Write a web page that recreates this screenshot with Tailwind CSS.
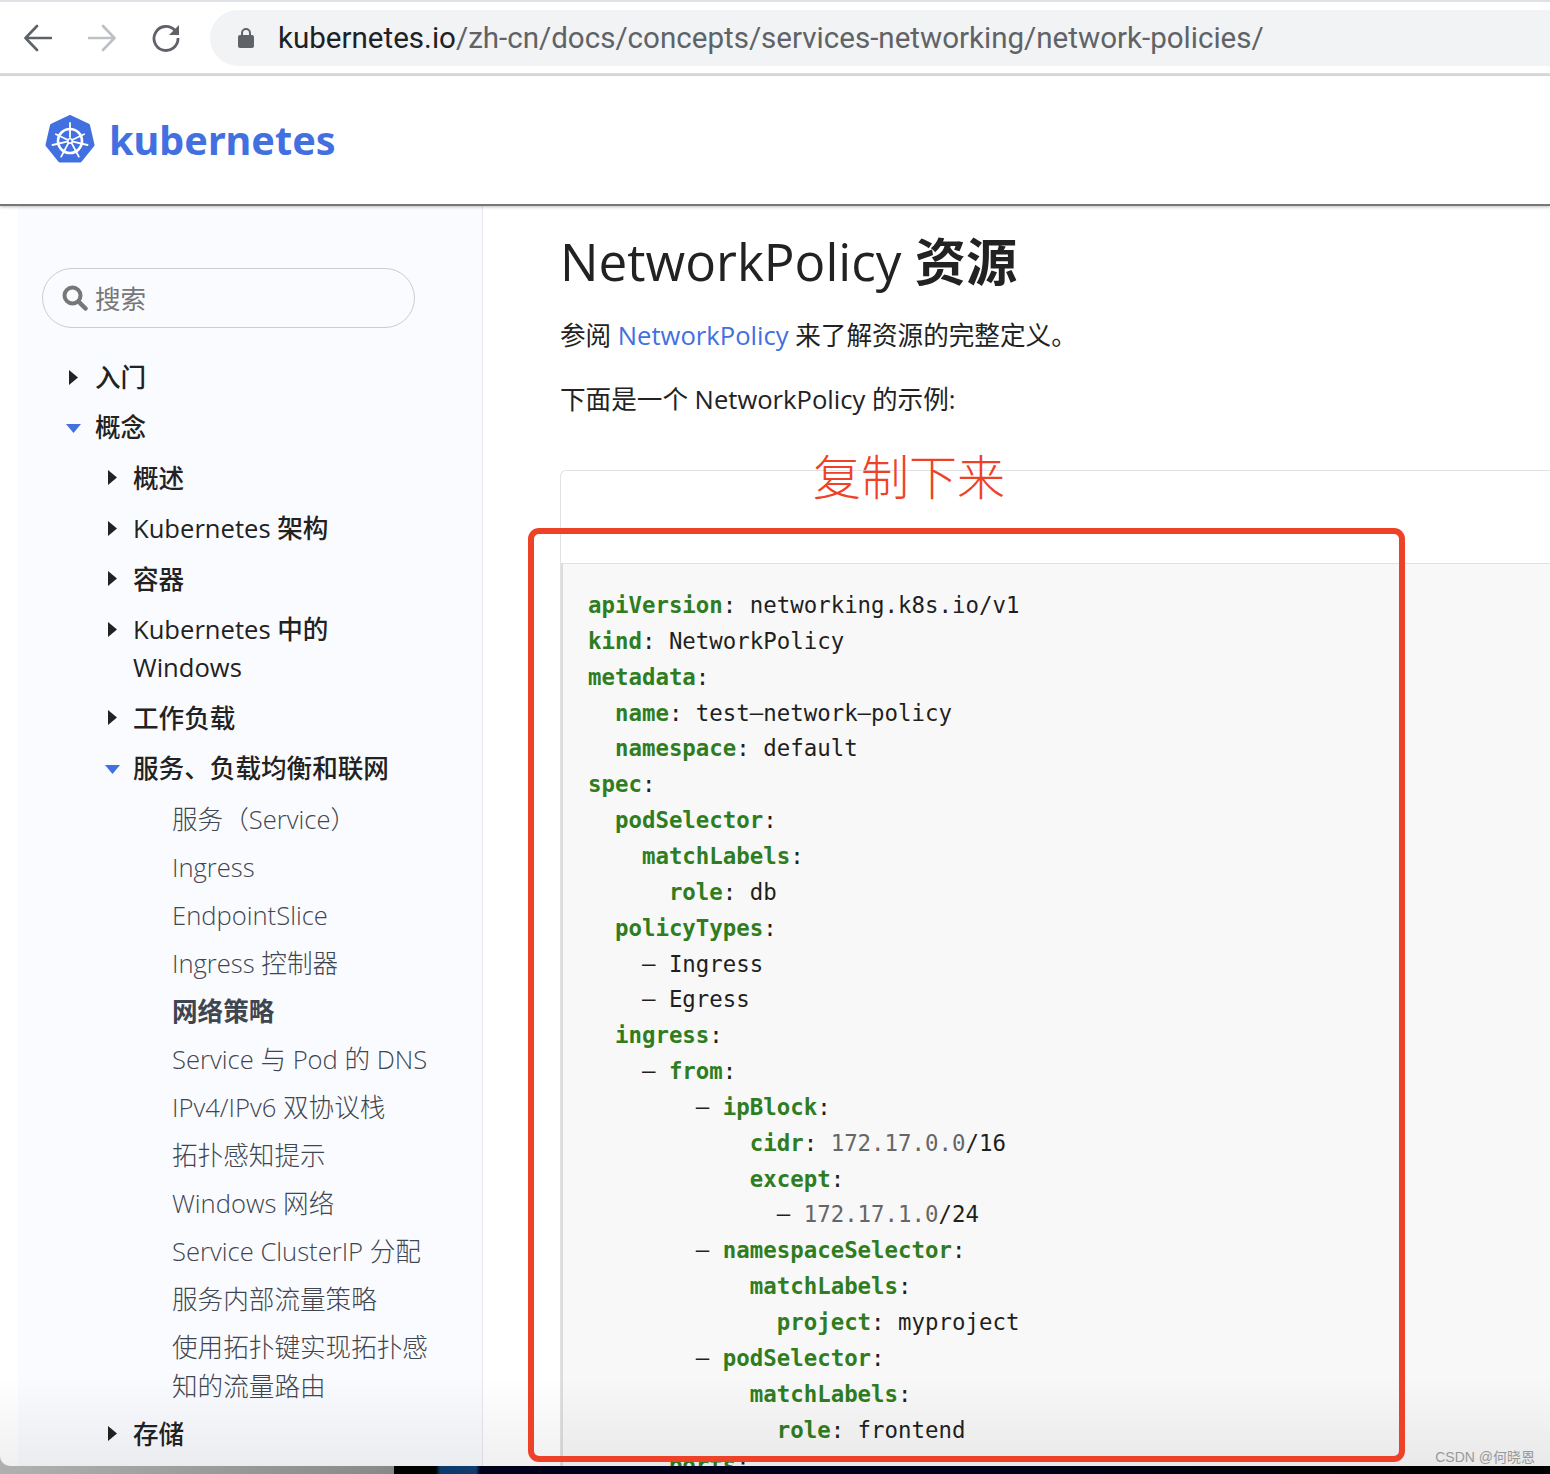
<!DOCTYPE html>
<html lang="zh-CN">
<head>
  <meta charset="UTF-8" />
  <meta name="viewport" content="width=device-width, initial-scale=1.0" />
  <script src="https://cdn.jsdelivr.net/npm/@tailwindcss/browser@4"></script>
  <title>网络策略 | Kubernetes</title>
</head>
<body class="relative h-[1474px] overflow-hidden bg-[linear-gradient(90deg,#b0b0b0_0,#888_394px,#000_394px,#000_436px,#0a3a6a_440px,#123c6e_476px,#00001c_480px,#00001a_1000px,#000_1400px)] font-['Open_Sans','Noto_Sans_CJK_SC',sans-serif] text-[#222]">

  <!-- Browser window -->
  <div class="relative flex h-[1466px] flex-col overflow-hidden rounded-bl-[10px] bg-white">

    <!-- Browser toolbar -->
    <div class="flex h-[76px] shrink-0 items-center border-t-2 border-b-[3px] border-t-[#dee1e6] border-b-[#dcdcdc] bg-white pl-[24px]">
      <svg class="w-[28px] h-[28px]" viewBox="0 0 28 28" fill="none" stroke="#5f6368" stroke-width="2.6" stroke-linecap="round" stroke-linejoin="round"><path d="M27 14H2M13 2 1.5 14 13 26"/></svg>
      <svg class="ml-[36px] w-[28px] h-[28px]" viewBox="0 0 28 28" fill="none" stroke="#bdc1c6" stroke-width="2.6" stroke-linecap="round" stroke-linejoin="round"><path d="M1 14h25M15 2l11.500 12L15 26"/></svg>
      <svg class="ml-[36px] w-[28px] h-[28px]" viewBox="0 0 28 28" fill="none"><path d="M23 6.500A12 12 0 1 0 26 14" stroke="#5f6368" stroke-width="2.8"/><path d="M27 1v10H17z" fill="#5f6368"/></svg>
      <div class="ml-[30px] flex h-[56px] flex-1 items-center rounded-l-full bg-[#f1f3f4] pl-[28px] font-['Roboto',sans-serif] text-[29.560px]">
        <svg class="w-[16px] h-[21px]" viewBox="0 0 16 21"><path d="M4 9V6a4 4 0 0 1 8 0v3" fill="none" stroke="#5f6368" stroke-width="2"/><rect x="0" y="8" width="16" height="13" rx="2" fill="#5f6368"/></svg>
        <span class="ml-[24px] pt-[2px] text-[#202124]">kubernetes.io<span class="text-[#5f6368]">/zh-cn/docs/concepts/services-networking/network-policies/</span></span>
      </div>
    </div>

    <!-- Site header -->
    <header class="relative z-10 flex h-[130px] shrink-0 items-center border-b-2 border-[#777] bg-white pl-[45px] shadow-[0_1px_3px_rgba(0,0,0,0.25)]">
      <svg class="w-[50px] h-[50px]" viewBox="0 0 50 50">
        <polygon points="25,2 43,10.500 47.500,30 35,45.500 15,45.500 2.500,30 7,10.500" fill="#4270e0" stroke="#4270e0" stroke-width="4" stroke-linejoin="round"/>
        <g stroke="#fff" fill="none" stroke-linecap="round">
          <circle cx="25" cy="26" r="12" stroke-width="2.600"/>
          <circle cx="25" cy="26" r="2.200" stroke-width="1.600"/>
          <path stroke-width="1.800" d="M25 8V22M39.100 19.200 27.500 24.700M42.500 30 27.900 26.700M33.800 41.600 26.800 28.300M16.200 41.600 23.200 28.300M7.500 30 22.100 26.700M10.900 19.200 22.500 24.700"/>
        </g>
      </svg>
      <span class="mt-[2px] ml-[14px] font-['Noto_Sans',sans-serif] text-[39.600px] leading-none font-bold text-[#4270e0]">kubernetes</span>
    </header>

    <div class="flex min-h-0 flex-1">
      <!-- Sidebar -->
      <aside class="ml-[18px] w-[465px] shrink-0 border-r border-[#e6e7ef] bg-[#fafbff] pt-[62px] text-[25.600px] leading-[38.400px]">
        <div class="ml-[24px] flex h-[60px] w-[373px] items-center rounded-[30px] border border-[#ccc] pl-[19px] text-[#777]">
          <svg class="w-[26px] h-[26px]" viewBox="0 0 26 26" fill="none" stroke="#777"><circle cx="10.500" cy="10.500" r="8" stroke-width="4"/><path d="m16.500 16.500 7 7" stroke-width="4.500" stroke-linecap="round"/></svg>
          <span class="ml-[7px] pt-[4px]">搜索</span>
        </div>

        <nav class="mt-[25px] font-medium">
          <div class="flex py-[6px] pl-[48px]">
            <span class="flex h-[36px] w-[29px] shrink-0 items-center"><svg class="ml-[3px] w-[9px] h-[15px]" viewBox="0 0 9 15"><path d="M0 0l9 7.500L0 15z" fill="#222"/></svg></span>入门
          </div>
          <div class="flex py-[6px] pl-[48px]">
            <span class="flex h-[38px] w-[29px] shrink-0 items-center"><svg class="w-[15px] h-[9px]" viewBox="0 0 15 9"><path d="M0 0h15L7.500 9z" fill="#4270e0"/></svg></span>概念
          </div>
          <div class="flex py-[6px] pl-[87px]">
            <span class="flex h-[36px] w-[28px] shrink-0 items-center"><svg class="ml-[3px] w-[9px] h-[15px]" viewBox="0 0 9 15"><path d="M0 0l9 7.500L0 15z" fill="#222"/></svg></span>概述
          </div>
          <div class="flex py-[6px] pl-[87px] font-normal">
            <span class="flex h-[36px] w-[28px] shrink-0 items-center"><svg class="ml-[3px] w-[9px] h-[15px]" viewBox="0 0 9 15"><path d="M0 0l9 7.500L0 15z" fill="#222"/></svg></span><span>Kubernetes <b class="font-medium">架构</b></span>
          </div>
          <div class="flex py-[6px] pl-[87px]">
            <span class="flex h-[36px] w-[28px] shrink-0 items-center"><svg class="ml-[3px] w-[9px] h-[15px]" viewBox="0 0 9 15"><path d="M0 0l9 7.500L0 15z" fill="#222"/></svg></span>容器
          </div>
          <div class="flex py-[6px] pl-[87px] font-normal">
            <span class="flex h-[36px] w-[28px] shrink-0 items-center"><svg class="ml-[3px] w-[9px] h-[15px]" viewBox="0 0 9 15"><path d="M0 0l9 7.500L0 15z" fill="#222"/></svg></span><span class="w-[220px]">Kubernetes <b class="font-medium">中的</b> Windows</span>
          </div>
          <div class="flex py-[6px] pl-[87px]">
            <span class="flex h-[36px] w-[28px] shrink-0 items-center"><svg class="ml-[3px] w-[9px] h-[15px]" viewBox="0 0 9 15"><path d="M0 0l9 7.500L0 15z" fill="#222"/></svg></span>工作负载
          </div>
          <div class="flex py-[6px] pl-[87px]">
            <span class="flex h-[38px] w-[28px] shrink-0 items-center"><svg class="w-[15px] h-[9px]" viewBox="0 0 15 9"><path d="M0 0h15L7.500 9z" fill="#4270e0"/></svg></span>服务、负载均衡和联网
          </div>

          <ul class="mt-[2px] mb-[-1.500px] pl-[154px] pr-[30px] font-light text-[#3f4650] [&_li]:py-[4.800px]">
            <li>服务（Service）</li>
            <li>Ingress</li>
            <li>EndpointSlice</li>
            <li>Ingress 控制器</li>
            <li class="font-bold">网络策略</li>
            <li>Service 与 Pod 的 DNS</li>
            <li>IPv4/IPv6 双协议栈</li>
            <li>拓扑感知提示</li>
            <li>Windows 网络</li>
            <li>Service ClusterIP 分配</li>
            <li>服务内部流量策略</li>
            <li>使用拓扑键实现拓扑感知的流量路由</li>
          </ul>

          <div class="flex py-[6px] pl-[87px]">
            <span class="flex h-[36px] w-[28px] shrink-0 items-center"><svg class="ml-[3px] w-[9px] h-[15px]" viewBox="0 0 9 15"><path d="M0 0l9 7.500L0 15z" fill="#222"/></svg></span>存储
          </div>
        </nav>
      </aside>

      <!-- Main content -->
      <main class="min-w-0 flex-1 pt-[19px] pl-[77px]">
        <h2 class="text-[51.200px] leading-[72px]">NetworkPolicy <b class="font-bold">资源</b></h2>
        <p class="mt-[20px] text-[25.600px] leading-[38.400px]">参阅 <a class="text-[#4270e0]">NetworkPolicy</a> 来了解资源的完整定义。</p>
        <p class="mt-[25.600px] text-[25.600px] leading-[38.400px]">下面是一个 NetworkPolicy 的示例:</p>

        <!-- Code card -->
        <div class="mt-[51px] h-[1000px] rounded-tl-[6px] border-t border-l border-[#e2e2e2] pt-[92px]">
          <pre class="h-[920px] border-t border-l-2 border-t-[#e2e2e2] border-l-[#ddd] bg-[#f8f8f8] pt-[23.700px] pl-[25px] font-['DejaVu_Sans_Mono',monospace] text-[22.400px] leading-[35.840px] text-[#1f1f1f] [&_b]:font-bold [&_b]:text-[#2f7d1f] [&_i]:text-[#666] [&_i]:not-italic"><b>apiVersion</b>: networking.k8s.io/v1
<b>kind</b>: NetworkPolicy
<b>metadata</b>:
  <b>name</b>: test–network–policy
  <b>namespace</b>: default
<b>spec</b>:
  <b>podSelector</b>:
    <b>matchLabels</b>:
      <b>role</b>: db
  <b>policyTypes</b>:
    – Ingress
    – Egress
  <b>ingress</b>:
    – <b>from</b>:
        – <b>ipBlock</b>:
            <b>cidr</b>: <i>172.17.0.0</i>/16
            <b>except</b>:
              – <i>172.17.1.0</i>/24
        – <b>namespaceSelector</b>:
            <b>matchLabels</b>:
              <b>project</b>: myproject
        – <b>podSelector</b>:
            <b>matchLabels</b>:
              <b>role</b>: frontend
      <b>ports</b>:</pre>
        </div>
      </main>
    </div>

    <!-- Window fade towards the bottom edge -->
    <div class="pointer-events-none absolute inset-x-0 bottom-0 h-[90px] bg-linear-to-b from-black/0 to-black/6"></div>

    <!-- Screenshot annotation -->
    <div class="absolute top-[528px] left-[528px] h-[934px] w-[877px] rounded-[11px] border-[6px] border-[#ee4228]"></div>
    <div class="absolute top-[442px] left-[813px] text-[48px] leading-[70px] font-light text-[#ee4228]">复制下来</div>
    <div class="absolute right-[15px] bottom-[1px] font-['Liberation_Sans','Noto_Sans_CJK_SC',sans-serif] text-[14px] leading-[16px] text-[#999]">CSDN @何晓恩</div>
  </div>
</body>
</html>
